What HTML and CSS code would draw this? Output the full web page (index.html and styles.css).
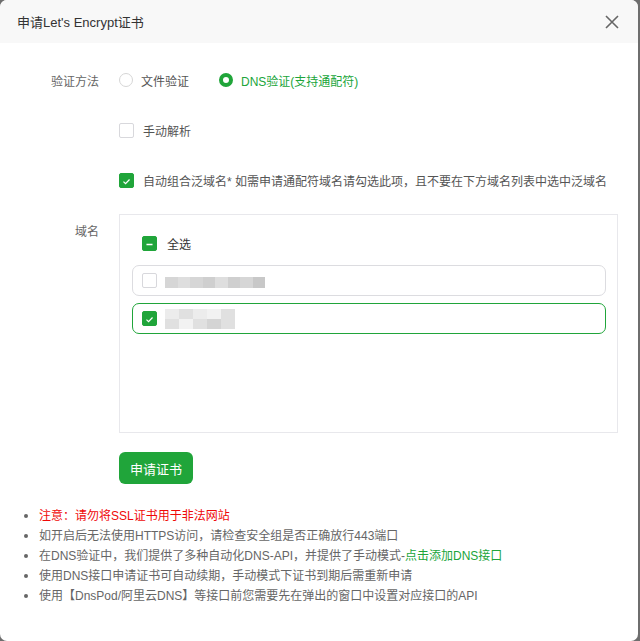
FILE: index.html
```html
<!DOCTYPE html>
<html lang="zh-CN">
<head>
<meta charset="utf-8">
<title>申请Let's Encrypt证书</title>
<link rel="stylesheet" href="styles.css">
</head>
<body>
<div class="dialog">
  <div class="dlg-head">
    <span class="dlg-title">申请Let's Encrypt证书</span>
    <span class="dlg-close">
      <svg width="14" height="14" viewBox="0 0 14 14"><path d="M1 1L13 13M13 1L1 13" stroke="#666" stroke-width="1.6" fill="none"/></svg>
    </span>
  </div>
  <div class="dlg-body">
    <div class="form-row">
      <div class="label">验证方法</div>
      <div class="field">
        <label class="radio"><span class="radio-circle"></span><span>文件验证</span></label>
        <label class="radio on"><span class="radio-circle"></span><span>DNS验证(支持通配符)</span></label>
      </div>
    </div>
    <div class="form-row">
      <div class="label"></div>
      <div class="field">
        <label class="check"><span class="box"></span><span>手动解析</span></label>
      </div>
    </div>
    <div class="form-row">
      <div class="label"></div>
      <div class="field">
        <label class="check"><span class="box on"><svg width="15" height="15" viewBox="0 0 15 15"><path d="M4 7.6L6.4 10L11 5.2" stroke="#fff" stroke-width="1.4" fill="none"/></svg></span><span>自动组合泛域名* 如需申请通配符域名请勾选此项，且不要在下方域名列表中选中泛域名</span></label>
      </div>
    </div>
    <div class="form-row domain-row">
      <div class="label label-top">域名</div>
      <div class="domain-box">
        <label class="check all"><span class="box on"><svg width="15" height="15" viewBox="0 0 15 15"><path d="M4 7.5H11" stroke="#fff" stroke-width="2" fill="none"/></svg></span><span>全选</span></label>
        <div class="item">
          <span class="box"></span>
          <span class="blur blur1"><i class="b1"></i><i class="b2"></i><i class="b1"></i><i class="b3"></i><i class="b2"></i><i class="b3"></i><i class="b1"></i><i class="b4"></i></span>
        </div>
        <div class="item selected">
          <span class="box on"><svg width="15" height="15" viewBox="0 0 15 15"><path d="M4 7.6L6.4 10L11 5.2" stroke="#fff" stroke-width="1.4" fill="none"/></svg></span>
          <span class="blur blur2">
            <span class="brow"><i class="c1"></i><i class="c2"></i><i class="c1"></i><i class="c3"></i><i class="c2"></i></span>
            <span class="brow"><i class="c2"></i><i class="c3"></i><i class="c2"></i><i class="c4"></i><i class="c2"></i></span>
          </span>
        </div>
      </div>
    </div>
    <div class="btn-row">
      <button class="btn">申请证书</button>
    </div>
    <ul class="tips">
      <li class="warn">注意：请勿将SSL证书用于非法网站</li>
      <li>如开启后无法使用HTTPS访问，请检查安全组是否正确放行443端口</li>
      <li>在DNS验证中，我们提供了多种自动化DNS-API，并提供了手动模式-<a class="link">点击添加DNS接口</a></li>
      <li>使用DNS接口申请证书可自动续期，手动模式下证书到期后需重新申请</li>
      <li>使用【DnsPod/阿里云DNS】等接口前您需要先在弹出的窗口中设置对应接口的API</li>
    </ul>
  </div>
</div>
</body>
</html>
```

FILE: styles.css
```css
html, body {
  margin: 0;
  padding: 0;
}
body {
  background: #6e6e6e;
  width: 640px;
  height: 641px;
  overflow: hidden;
  font-family: "Liberation Sans", "Noto Sans CJK SC", sans-serif;
  color: #333;
}
.dialog {
  width: 638px;
  height: 641px;
  background: #fff;
  border-radius: 7px;
  overflow: hidden;
}
.dlg-head {
  height: 43px;
  background: #f8f8f8;
  display: flex;
  align-items: center;
  justify-content: space-between;
  padding: 0 20px 0 17px;
}
.dlg-title {
  font-size: 13px;
  color: #333;
}
.dlg-close {
  display: flex;
  margin-right: -1px;
}
.dlg-body {
  padding: 22px 0 0 0;
}
.form-row {
  display: flex;
  align-items: center;
  height: 30px;
  margin-bottom: 20px;
}
.label {
  width: 99px;
  text-align: right;
  padding-right: 20px;
  font-size: 12px;
  color: #666;
  flex: none;
}
.field {
  display: flex;
  align-items: center;
  font-size: 12px;
  color: #555;
}
.radio {
  display: flex;
  align-items: center;
  margin-right: 30px;
}
.radio-circle {
  border: 1px solid #d6d6d6;
  border-radius: 50%;
  margin-right: 8px;
  box-sizing: border-box;
  width: 14px;
  height: 14px;
}
.radio.on {
  color: #20a53a;
}
.radio.on .radio-circle {
  border: 4px solid #20a53a;
  background: #fff;
}
.check {
  display: flex;
  align-items: center;
}
.box {
  width: 15px;
  height: 15px;
  box-sizing: border-box;
  border: 1px solid #d8d8dc;
  border-radius: 2px;
  margin-right: 9px;
  display: inline-flex;
  flex: none;
  background: #fff;
}
.box.on {
  background: #20a53a;
  border-color: #20a53a;
}
.domain-row {
  height: auto;
  align-items: flex-start;
  margin-top: -1px;
  margin-bottom: 19px;
}
.label-top {
  padding-top: 8px;
}
.domain-box {
  width: 499px;
  height: 219px;
  box-sizing: border-box;
  border: 1px solid #e8e8ec;
  padding: 20px 11px 0 12px;
  font-size: 12px;
}
.check.all {
  padding-left: 10px;
  margin-bottom: 13px;
  color: #333;
}
.check.all .box {
  margin-right: 10px;
}
.item {
  height: 31px;
  box-sizing: border-box;
  border: 1px solid #dcdce0;
  border-radius: 7px;
  display: flex;
  align-items: center;
  padding-left: 9px;
  margin-bottom: 7px;
}
.item.selected {
  border-color: #20a53a;
}
.item .box {
  margin-right: 8px;
}
.blur {
  display: flex;
  flex-direction: column;
}
.blur1 {
  flex-direction: row;
  height: 11px;
  margin-top: 4px;
}
.blur i, .brow i {
  display: block;
  height: 100%;
}
.blur1 i { width: 12.5px; }
.b1 { background: #d6d6d6; }
.b2 { background: #dedede; }
.b3 { background: #cfcfcf; }
.b4 { background: #c8c8c8; }
.blur2 {
  height: 20px;
}
.brow {
  display: flex;
  height: 10px;
}
.brow i { width: 14px; }
.c1 { background: #ececec; }
.c2 { background: #e0e0e0; }
.c3 { background: #f2f2f2; }
.c4 { background: #d4d4d4; }
.btn-row {
  padding-left: 119px;
}
.btn {
  width: 74px;
  height: 32px;
  border: none;
  border-radius: 6px;
  background: #20a53a;
  color: #fff;
  font-size: 13px;
  font-family: "Liberation Sans", "Noto Sans CJK SC", sans-serif;
  padding: 0;
}
.tips {
  margin: 22px 0 0 0;
  padding-left: 39px;
  list-style: none;
  font-size: 12px;
  line-height: 20px;
  color: #666;
}
.tips li {
  position: relative;
}
.tips li::before {
  content: "";
  position: absolute;
  left: -15px;
  top: 8px;
  width: 4px;
  height: 4px;
  border-radius: 50%;
  background: #666;
}
.tips .warn {
  color: #ef0808;
}
.link {
  color: #20a53a;
}
```
